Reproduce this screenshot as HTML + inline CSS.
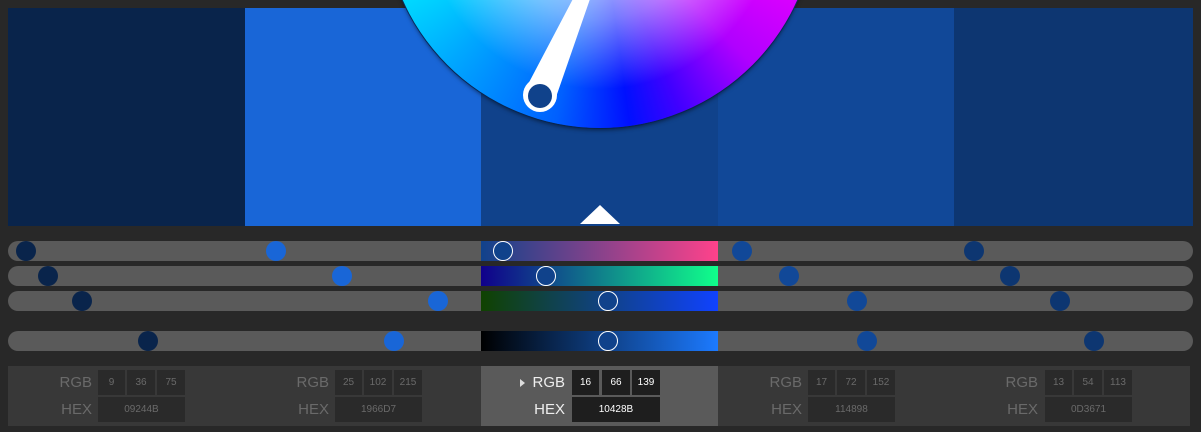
<!DOCTYPE html>
<html><head><style>
body{margin:0;width:1201px;height:432px;background:#282828;position:relative;overflow:hidden;font-family:"Liberation Sans",sans-serif}
.sw{position:absolute;top:8px;height:218px}
.wheel{position:absolute;left:384px;top:-304px;width:432px;height:432px;border-radius:50%;
background:radial-gradient(circle,rgba(255,255,255,1) 0%,rgba(255,255,255,.45) 35%,rgba(255,255,255,0) 58%),conic-gradient(#ffff00 0deg,#ff0000 35deg,#ff00ff 80deg,#ff00ff 95deg,#b000ff 135deg,#4000ff 158deg,#0010ff 172deg,#0060ff 192deg,#00a8ff 225deg,#00ffff 262deg,#00ff90 300deg,#00ff00 330deg,#ffff00 360deg);
box-shadow:0 2px 4px rgba(0,0,0,.5),0 0 0 1px #0d3a7a}
.tr{position:absolute;left:8px;width:1185px;height:20px;border-radius:10px;background:#5a5a5a}
.g{position:absolute;left:473px;width:237px;top:0;height:20px}
.d{position:absolute;width:20px;height:20px;border-radius:50%;top:0;margin-left:-18px}
.r{border:1.5px solid #fff;box-sizing:border-box;background:#10428b}
.p{position:absolute;top:366px;height:60px;background:#383838}
.lb{position:absolute;font-size:15px;color:#6a6a6a;text-align:right;width:50px}
.bx{position:absolute;background:#2a2a2a;color:#6a6a6a;font-size:10px;text-align:center;line-height:25px;height:25px}
.act .lb{color:#eee}.act .bx{background:#1e1e1e;color:#fff}
</style></head><body>
<div class="sw" style="left:8px;width:237px;background:#09244B"></div>
<div class="sw" style="left:245px;width:236px;background:#1966D7"></div>
<div class="sw" style="left:481px;width:237px;background:#10428B"></div>
<div class="sw" style="left:718px;width:236px;background:#114898"></div>
<div class="sw" style="left:954px;width:239px;background:#0D3671"></div>
<div class="wheel"></div>
<svg style="position:absolute;left:0;top:0" width="1201" height="230">
<polygon points="555,100 525,90 575,-5 590,-1" fill="#fff"/>
<circle cx="540" cy="95" r="17" fill="#fff"/>
<circle cx="540" cy="96" r="12" fill="#10428b"/>
<polygon points="580,224 600,205 620,224" fill="#fff"/>
</svg>
<div class="tr" style="top:241px"><div class="g" style="background:linear-gradient(90deg,#10428b,#ff428b)"></div>
<div class="d" style="left:26px;background:#09244B"></div><div class="d" style="left:276px;background:#1966D7"></div><div class="d r" style="left:503px"></div><div class="d" style="left:742px;background:#114898"></div><div class="d" style="left:974px;background:#0D3671"></div></div>
<div class="tr" style="top:266px"><div class="g" style="background:linear-gradient(90deg,#10008b,#10ff8b)"></div>
<div class="d" style="left:48px;background:#09244B"></div><div class="d" style="left:342px;background:#1966D7"></div><div class="d r" style="left:546px"></div><div class="d" style="left:789px;background:#114898"></div><div class="d" style="left:1010px;background:#0D3671"></div></div>
<div class="tr" style="top:291px"><div class="g" style="background:linear-gradient(90deg,#104200,#1042ff)"></div>
<div class="d" style="left:82px;background:#09244B"></div><div class="d" style="left:438px;background:#1966D7"></div><div class="d r" style="left:608px"></div><div class="d" style="left:857px;background:#114898"></div><div class="d" style="left:1060px;background:#0D3671"></div></div>
<div class="tr" style="top:331px"><div class="g" style="background:linear-gradient(90deg,#000,#1c7aff)"></div>
<div class="d" style="left:148px;background:#09244B"></div><div class="d" style="left:394px;background:#1966D7"></div><div class="d r" style="left:608px"></div><div class="d" style="left:867px;background:#114898"></div><div class="d" style="left:1094px;background:#0D3671"></div></div>

<div class="p" style="left:8px;width:473px"></div>
<div class="p act" style="left:481px;width:237px;background:#5a5a5a"></div>
<div class="p" style="left:718px;width:472px"></div>

<div style="position:absolute;left:8px;top:366px">
<div class="lb" style="left:34px;top:8px">RGB</div><div class="lb" style="left:34px;top:35px">HEX</div>
<div class="bx" style="left:90px;top:4px;width:27px">9</div><div class="bx" style="left:119px;top:4px;width:28px">36</div><div class="bx" style="left:149px;top:4px;width:28px">75</div>
<div class="bx" style="left:90px;top:31px;width:87px">09244B</div></div>
<div style="position:absolute;left:245px;top:366px">
<div class="lb" style="left:34px;top:8px">RGB</div><div class="lb" style="left:34px;top:35px">HEX</div>
<div class="bx" style="left:90px;top:4px;width:27px">25</div><div class="bx" style="left:119px;top:4px;width:28px">102</div><div class="bx" style="left:149px;top:4px;width:28px">215</div>
<div class="bx" style="left:90px;top:31px;width:87px">1966D7</div></div>
<div class="act" style="position:absolute;left:481px;top:366px">
<div style="position:absolute;left:39px;top:13px;width:0;height:0;border-left:5px solid #ddd;border-top:4px solid transparent;border-bottom:4px solid transparent"></div>
<div class="lb" style="left:34px;top:8px">RGB</div><div class="lb" style="left:34px;top:35px">HEX</div>
<div class="bx" style="left:91px;top:4px;width:27px">16</div><div class="bx" style="left:121px;top:4px;width:28px">66</div><div class="bx" style="left:151px;top:4px;width:28px">139</div>
<div class="bx" style="left:91px;top:31px;width:88px">10428B</div></div>
<div style="position:absolute;left:718px;top:366px">
<div class="lb" style="left:34px;top:8px">RGB</div><div class="lb" style="left:34px;top:35px">HEX</div>
<div class="bx" style="left:90px;top:4px;width:27px">17</div><div class="bx" style="left:119px;top:4px;width:28px">72</div><div class="bx" style="left:149px;top:4px;width:28px">152</div>
<div class="bx" style="left:90px;top:31px;width:87px">114898</div></div>
<div style="position:absolute;left:954px;top:366px">
<div class="lb" style="left:34px;top:8px">RGB</div><div class="lb" style="left:34px;top:35px">HEX</div>
<div class="bx" style="left:91px;top:4px;width:27px">13</div><div class="bx" style="left:120px;top:4px;width:28px">54</div><div class="bx" style="left:150px;top:4px;width:28px">113</div>
<div class="bx" style="left:91px;top:31px;width:87px">0D3671</div></div>
</body></html>
